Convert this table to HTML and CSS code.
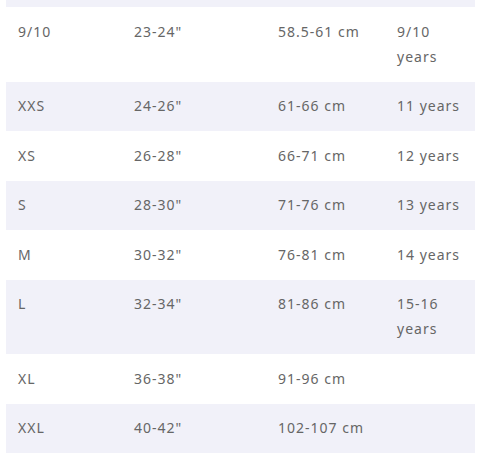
FILE: index.html
```
<!DOCTYPE html>
<html>
<head>
<meta charset="utf-8">
<link rel="stylesheet" href="styles.css">
</head>
<body>
<div class="wrap">
<table class="sizes">
<colgroup>
<col class="c1"><col class="c2"><col class="c3"><col class="c4">
</colgroup>
<tbody>
<tr class="stub"><td></td><td></td><td></td><td></td></tr>
<tr><td>9/10</td><td>23-24"</td><td>58.5-61 cm</td><td>9/10 years</td></tr>
<tr><td>XXS</td><td>24-26"</td><td>61-66 cm</td><td>11 years</td></tr>
<tr><td>XS</td><td>26-28"</td><td>66-71 cm</td><td>12 years</td></tr>
<tr><td>S</td><td>28-30"</td><td>71-76 cm</td><td>13 years</td></tr>
<tr><td>M</td><td>30-32"</td><td>76-81 cm</td><td>14 years</td></tr>
<tr><td>L</td><td>32-34"</td><td>81-86 cm</td><td>15-16 years</td></tr>
<tr><td>XL</td><td>36-38"</td><td>91-96 cm</td><td></td></tr>
<tr><td>XXL</td><td>40-42"</td><td>102-107 cm</td><td></td></tr>
</tbody>
</table>
</div>
</body>
</html>
```
FILE: styles.css
```
html, body {
  margin: 0;
  padding: 0;
  background: #ffffff;
}
.wrap {
  padding: 0 21px 0 6px;
}
.sizes {
  width: 469px;
  border-collapse: collapse;
  table-layout: fixed;
  font-family: "Noto Sans", sans-serif;
  font-size: 14px;
  line-height: 25px;
  letter-spacing: 1px;
  color: #666666;
}
.c1 { width: 116px; }
.c2 { width: 144px; }
.c3 { width: 119px; }
.c4 { width: 90px; }
.sizes td {
  padding: 11.5px 12px 13px;
  vertical-align: top;
}
.sizes tr:nth-child(odd) td {
  background: #f1f1f9;
}
.sizes tr.stub td {
  padding: 0;
  height: 7px;
  line-height: 7px;
}
```
